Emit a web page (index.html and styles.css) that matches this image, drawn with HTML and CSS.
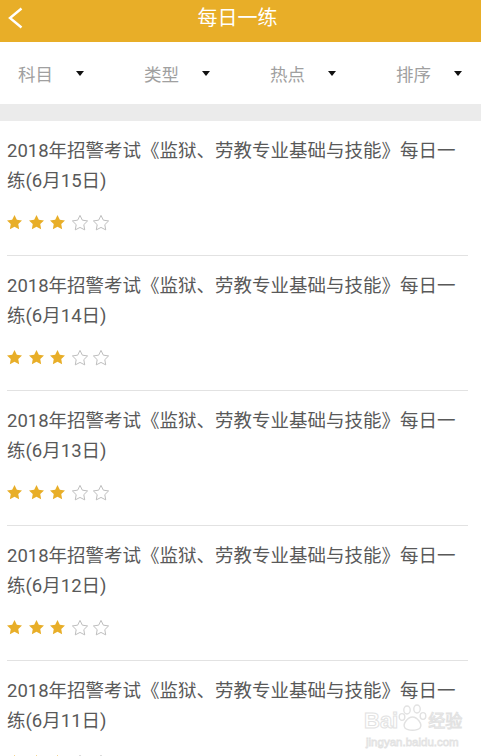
FILE: index.html
```html
<!DOCTYPE html>
<html lang="zh-CN">
    <head>
        <meta charset="UTF-8">
        <title>每日一练</title>
        <link rel="stylesheet" href="styles.css">
    </head>
    <body>
        <div class="header">
            <a class="back" href="#">
                <svg width="16" height="22" viewBox="0 0 16 22">
                    <polyline points="13.5,1.5 2,11 13.5,20.5" fill="none" stroke="#fff" stroke-width="2.4" stroke-linejoin="miter"/>
                </svg>
            </a>
            <h1 class="title">每日一练</h1>
            <span></span>
        </div>

        <!-- 筛选条 -->
        <div class="filter">
            <div class="filter-item"><span>科目</span><i class="arrow"></i></div>
            <div class="filter-item"><span>类型</span><i class="arrow"></i></div>
            <div class="filter-item"><span>热点</span><i class="arrow"></i></div>
            <div class="filter-item"><span>排序</span><i class="arrow"></i></div>
        </div>
        <div class="band"></div>

        <ul class="list">
            <li class="item">
                <p class="item-title">2018年招警考试《监狱、劳教专业基础与技能》每日一练(6月15日)</p>
                <div class="stars">
                    <svg class="star on" viewBox="2 2 20 19.3"><polygon points="12,2 15.09,8.26 22,9.27 17,14.14 18.18,21.02 12,17.77 5.82,21.02 7,14.14 2,9.27 8.91,8.26"/></svg>
                    <svg class="star on" viewBox="2 2 20 19.3"><polygon points="12,2 15.09,8.26 22,9.27 17,14.14 18.18,21.02 12,17.77 5.82,21.02 7,14.14 2,9.27 8.91,8.26"/></svg>
                    <svg class="star on" viewBox="2 2 20 19.3"><polygon points="12,2 15.09,8.26 22,9.27 17,14.14 18.18,21.02 12,17.77 5.82,21.02 7,14.14 2,9.27 8.91,8.26"/></svg>
                    <svg class="star off" viewBox="1.5 1.5 21 20.3"><polygon points="12,2 15.09,8.26 22,9.27 17,14.14 18.18,21.02 12,17.77 5.82,21.02 7,14.14 2,9.27 8.91,8.26"/></svg>
                    <svg class="star off" viewBox="1.5 1.5 21 20.3"><polygon points="12,2 15.09,8.26 22,9.27 17,14.14 18.18,21.02 12,17.77 5.82,21.02 7,14.14 2,9.27 8.91,8.26"/></svg>
                </div>
            </li>
            <li class="item">
                <p class="item-title">2018年招警考试《监狱、劳教专业基础与技能》每日一练(6月14日)</p>
                <div class="stars">
                    <svg class="star on" viewBox="2 2 20 19.3"><polygon points="12,2 15.09,8.26 22,9.27 17,14.14 18.18,21.02 12,17.77 5.82,21.02 7,14.14 2,9.27 8.91,8.26"/></svg>
                    <svg class="star on" viewBox="2 2 20 19.3"><polygon points="12,2 15.09,8.26 22,9.27 17,14.14 18.18,21.02 12,17.77 5.82,21.02 7,14.14 2,9.27 8.91,8.26"/></svg>
                    <svg class="star on" viewBox="2 2 20 19.3"><polygon points="12,2 15.09,8.26 22,9.27 17,14.14 18.18,21.02 12,17.77 5.82,21.02 7,14.14 2,9.27 8.91,8.26"/></svg>
                    <svg class="star off" viewBox="1.5 1.5 21 20.3"><polygon points="12,2 15.09,8.26 22,9.27 17,14.14 18.18,21.02 12,17.77 5.82,21.02 7,14.14 2,9.27 8.91,8.26"/></svg>
                    <svg class="star off" viewBox="1.5 1.5 21 20.3"><polygon points="12,2 15.09,8.26 22,9.27 17,14.14 18.18,21.02 12,17.77 5.82,21.02 7,14.14 2,9.27 8.91,8.26"/></svg>
                </div>
            </li>
            <li class="item">
                <p class="item-title">2018年招警考试《监狱、劳教专业基础与技能》每日一练(6月13日)</p>
                <div class="stars">
                    <svg class="star on" viewBox="2 2 20 19.3"><polygon points="12,2 15.09,8.26 22,9.27 17,14.14 18.18,21.02 12,17.77 5.82,21.02 7,14.14 2,9.27 8.91,8.26"/></svg>
                    <svg class="star on" viewBox="2 2 20 19.3"><polygon points="12,2 15.09,8.26 22,9.27 17,14.14 18.18,21.02 12,17.77 5.82,21.02 7,14.14 2,9.27 8.91,8.26"/></svg>
                    <svg class="star on" viewBox="2 2 20 19.3"><polygon points="12,2 15.09,8.26 22,9.27 17,14.14 18.18,21.02 12,17.77 5.82,21.02 7,14.14 2,9.27 8.91,8.26"/></svg>
                    <svg class="star off" viewBox="1.5 1.5 21 20.3"><polygon points="12,2 15.09,8.26 22,9.27 17,14.14 18.18,21.02 12,17.77 5.82,21.02 7,14.14 2,9.27 8.91,8.26"/></svg>
                    <svg class="star off" viewBox="1.5 1.5 21 20.3"><polygon points="12,2 15.09,8.26 22,9.27 17,14.14 18.18,21.02 12,17.77 5.82,21.02 7,14.14 2,9.27 8.91,8.26"/></svg>
                </div>
            </li>
            <li class="item">
                <p class="item-title">2018年招警考试《监狱、劳教专业基础与技能》每日一练(6月12日)</p>
                <div class="stars">
                    <svg class="star on" viewBox="2 2 20 19.3"><polygon points="12,2 15.09,8.26 22,9.27 17,14.14 18.18,21.02 12,17.77 5.82,21.02 7,14.14 2,9.27 8.91,8.26"/></svg>
                    <svg class="star on" viewBox="2 2 20 19.3"><polygon points="12,2 15.09,8.26 22,9.27 17,14.14 18.18,21.02 12,17.77 5.82,21.02 7,14.14 2,9.27 8.91,8.26"/></svg>
                    <svg class="star on" viewBox="2 2 20 19.3"><polygon points="12,2 15.09,8.26 22,9.27 17,14.14 18.18,21.02 12,17.77 5.82,21.02 7,14.14 2,9.27 8.91,8.26"/></svg>
                    <svg class="star off" viewBox="1.5 1.5 21 20.3"><polygon points="12,2 15.09,8.26 22,9.27 17,14.14 18.18,21.02 12,17.77 5.82,21.02 7,14.14 2,9.27 8.91,8.26"/></svg>
                    <svg class="star off" viewBox="1.5 1.5 21 20.3"><polygon points="12,2 15.09,8.26 22,9.27 17,14.14 18.18,21.02 12,17.77 5.82,21.02 7,14.14 2,9.27 8.91,8.26"/></svg>
                </div>
            </li>
            <li class="item">
                <p class="item-title">2018年招警考试《监狱、劳教专业基础与技能》每日一练(6月11日)</p>
                <div class="stars">
                    <svg class="star on" viewBox="2 2 20 19.3"><polygon points="12,2 15.09,8.26 22,9.27 17,14.14 18.18,21.02 12,17.77 5.82,21.02 7,14.14 2,9.27 8.91,8.26"/></svg>
                    <svg class="star on" viewBox="2 2 20 19.3"><polygon points="12,2 15.09,8.26 22,9.27 17,14.14 18.18,21.02 12,17.77 5.82,21.02 7,14.14 2,9.27 8.91,8.26"/></svg>
                    <svg class="star on" viewBox="2 2 20 19.3"><polygon points="12,2 15.09,8.26 22,9.27 17,14.14 18.18,21.02 12,17.77 5.82,21.02 7,14.14 2,9.27 8.91,8.26"/></svg>
                    <svg class="star off" viewBox="1.5 1.5 21 20.3"><polygon points="12,2 15.09,8.26 22,9.27 17,14.14 18.18,21.02 12,17.77 5.82,21.02 7,14.14 2,9.27 8.91,8.26"/></svg>
                    <svg class="star off" viewBox="1.5 1.5 21 20.3"><polygon points="12,2 15.09,8.26 22,9.27 17,14.14 18.18,21.02 12,17.77 5.82,21.02 7,14.14 2,9.27 8.91,8.26"/></svg>
                </div>
            </li>
        </ul>

        <!-- 水印 -->
        <div class="watermark">
            <div class="wm-top">
                <span class="wm-bai">Bai</span>
                <svg class="wm-paw" width="30" height="28" viewBox="0 0 30 28">
                    <ellipse cx="9" cy="6" rx="3.2" ry="4" fill="none" stroke="#e2e2e2" stroke-width="1.4"/>
                    <ellipse cx="19" cy="5" rx="3.2" ry="4" fill="none" stroke="#e2e2e2" stroke-width="1.4"/>
                    <ellipse cx="4" cy="13" rx="2.8" ry="3.4" fill="none" stroke="#e2e2e2" stroke-width="1.4"/>
                    <ellipse cx="25" cy="12" rx="2.8" ry="3.4" fill="none" stroke="#e2e2e2" stroke-width="1.4"/>
                    <path d="M7 24 C4 20 10 13 14.5 13 C19 13 25 20 22 24 C19 27 10 27 7 24 Z" fill="none" stroke="#e2e2e2" stroke-width="1.4"/>
                </svg>
                <span class="wm-jy">经验</span>
            </div>
            <div class="wm-url">jingyan.baidu.com</div>
        </div>
    </body>
</html>
```

FILE: styles.css
```css
body {
    margin: 0;
    background-color: #fff;
    font-family: Roboto, "Noto Sans CJK SC", sans-serif;
}

.header {
    height: 42px;
    box-sizing: border-box;
    padding: 0 8px 6px 8px;
    background-color: #e8ae28;
    display: grid;
    grid-template-columns: 1fr auto 1fr;
    align-items: center;
}

.back {
    display: flex;
    align-items: center;
}

.title {
    margin: 0;
    margin-right: 6px;
    font-size: 20px;
    font-weight: normal;
    color: #fff;
    line-height: 36px;
}

/* 筛选 */
.filter {
    height: 62px;
    padding-left: 18px;
    display: flex;
    align-items: center;
    overflow: hidden;
}

.filter-item {
    flex: 0 0 126px;
    display: flex;
    align-items: center;
    font-size: 17.5px;
    color: #a0a0a0;
}

.arrow {
    margin-left: 23px;
    width: 0;
    height: 0;
    border-left: 4.5px solid transparent;
    border-right: 4.5px solid transparent;
    border-top: 5px solid #111;
}

.band {
    height: 17px;
    background-color: #ebebeb;
}

/* 列表 */
.list {
    margin: 0;
    padding: 0 13px 0 7px;
    list-style: none;
}

.item {
    padding: 15px 0 25px 0;
    border-bottom: 1px solid #e2e2e2;
}

.item-title {
    margin: 0;
    font-size: 18.5px;
    line-height: 30px;
    color: #595959;
}

.stars {
    margin-top: 19px;
    height: 15px;
    display: flex;
    gap: 6.7px;
}

.star {
    width: 15px;
    height: 14.5px;
}

.star.on {
    fill: #e8ae28;
}

.star.off {
    width: 16px;
    height: 15.5px;
    margin: 0 -0.5px;
    fill: none;
    stroke: #bdbdbd;
    stroke-width: 1.3;
}

.watermark {
    position: absolute;
    left: 364px;
    top: 702px;
    color: #fff;
    font-family: "Liberation Sans", "Noto Sans CJK SC", sans-serif;
}

.wm-top {
    display: flex;
    align-items: flex-end;
    height: 30px;
}

.wm-bai {
    font-size: 22px;
    font-weight: bold;
    line-height: 22px;
    -webkit-text-stroke: 1px #e2e2e2;
}

.wm-jy {
    font-size: 17px;
    line-height: 20px;
    -webkit-text-stroke: 1px #e2e2e2;
}

.wm-url {
    font-size: 11.5px;
    line-height: 12px;
    margin-top: 4px;
    margin-left: 2px;
    -webkit-text-stroke: 0.8px #e2e2e2;
}
```
